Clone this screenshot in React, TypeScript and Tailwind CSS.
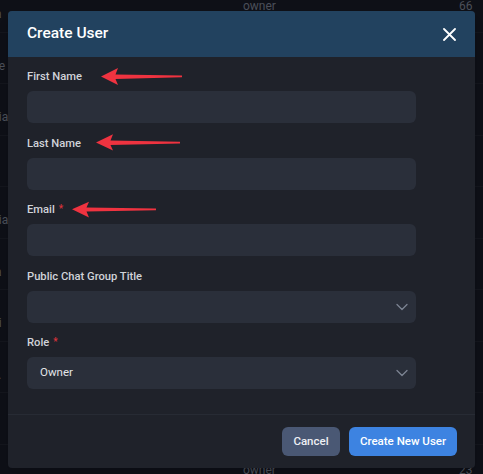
import * as React from "react";

const bgRows = [
  { left: "ia", right: "66", mid: "owner" },
  { left: "ne", right: "72", mid: "" },
  { left: "dia", right: "0b", mid: "" },
  { left: "", right: "pa", mid: "" },
  { left: "dia", right: "64", mid: "" },
  { left: "ia", right: "de", mid: "" },
  { left: "di", right: "db", mid: "" },
  { left: "s.", right: "41", mid: "" },
  { left: "n", right: "18", mid: "" },
  { left: "", right: "23", mid: "owner" },
];

function Chevron() {
  return (
    <svg width="12" height="8" viewBox="0 0 12 8" fill="none" className="text-[#7c8493]">
      <path d="M1 1.5l5 5 5-5" stroke="currentColor" strokeWidth="1.3" strokeLinecap="round" strokeLinejoin="round" />
    </svg>
  );
}

function Field({
  label,
  required,
  children,
}: {
  label: string;
  required?: boolean;
  children?: React.ReactNode;
}) {
  return (
    <div className="mb-[12.5px]">
      <div className="flex h-4 items-center text-[11.2px] font-medium leading-4 text-[#d0d3d9]">
        {label}
        {required ? <span className="ml-[4px] -mt-[3px] text-[10px] text-[#d9333b]">*</span> : null}
      </div>
      <div className="mt-[6px] flex h-8 w-[389px] items-center justify-between rounded-md bg-[#2a2f3a] pl-[13px] pr-[8px] text-[11.5px] text-[#e3e5e9]">
        {children}
      </div>
    </div>
  );
}

export default function App() {
  return (
    <div
      className="relative h-[474px] w-[483px] overflow-hidden bg-[#0e1017]"
      style={{ fontFamily: "Roboto, 'Noto Sans', sans-serif" }}
    >
      {/* table behind the modal */}
      <div className="-mt-[19px] flex flex-col text-[12px] text-[#4b4f59]">
        {bgRows.map((r, i) => (
          <div key={i} className="grid h-[51.5px] grid-cols-[56px_1fr_40px] items-center border-b border-[#14161d]">
            <div className="-ml-[8px] pt-4">{r.left}</div>
            <div className="pl-[187px]">{r.mid}</div>
            <div className="pl-[16px]">{r.right}</div>
          </div>
        ))}
      </div>

      {/* modal */}
      <div className="absolute left-[8px] top-[11px] w-[467px] overflow-hidden rounded-[4px] bg-[#1f222a] shadow-lg">
        <div className="flex h-[46px] items-center justify-between bg-[#22425f] pl-[19px] pr-[19px]">
          <h1 className="text-[15.5px] font-medium text-white">Create User</h1>
          <svg width="13" height="13" viewBox="0 0 13 13" fill="none">
            <path d="M1 1l11 11M12 1L1 12" stroke="white" strokeWidth="1.8" strokeLinecap="round" />
          </svg>
        </div>

        <div className="px-[19px] pb-[12.5px] pt-3">
          <Field label="First Name" />
          <Field label="Last Name" />
          <Field label="Email" required />
          <Field label="Public Chat Group Title">
            <span />
            <Chevron />
          </Field>
          <Field label="Role" required>
            <span>Owner</span>
            <Chevron />
          </Field>
        </div>

        <div className="flex items-center justify-end gap-[9px] border-t border-[#272b34] pb-[12px] pr-[18px] pt-[12px]">
          <button className="h-[29px] w-[58px] rounded-md bg-[#4a5874] text-[11.5px] font-medium text-[#eef0f4]">
            Cancel
          </button>
          <button className="h-[29px] w-[108px] rounded-md bg-[#3d83e1] text-[11.5px] font-medium text-white">
            Create New User
          </button>
        </div>
      </div>

      {/* annotation arrows */}
      <svg className="pointer-events-none absolute left-0 top-0" width="483" height="474" viewBox="0 0 483 474">
        <g fill="#ef3340">
          <path d="M101 76.5 L118 68 L115.5 74.5 L182 75.6 L182 77.2 L115.5 79 L118 85 Z" />
          <path d="M96 142.6 L113 134.3 L110.5 140.6 L180 141.8 L180 143.4 L110.5 145 L113 150.5 Z" />
          <path d="M72 209.3 L89 201.7 L86.5 207.6 L156 208.6 L156 210.2 L86.5 211.6 L89 217.5 Z" />
        </g>
      </svg>
    </div>
  );
}
